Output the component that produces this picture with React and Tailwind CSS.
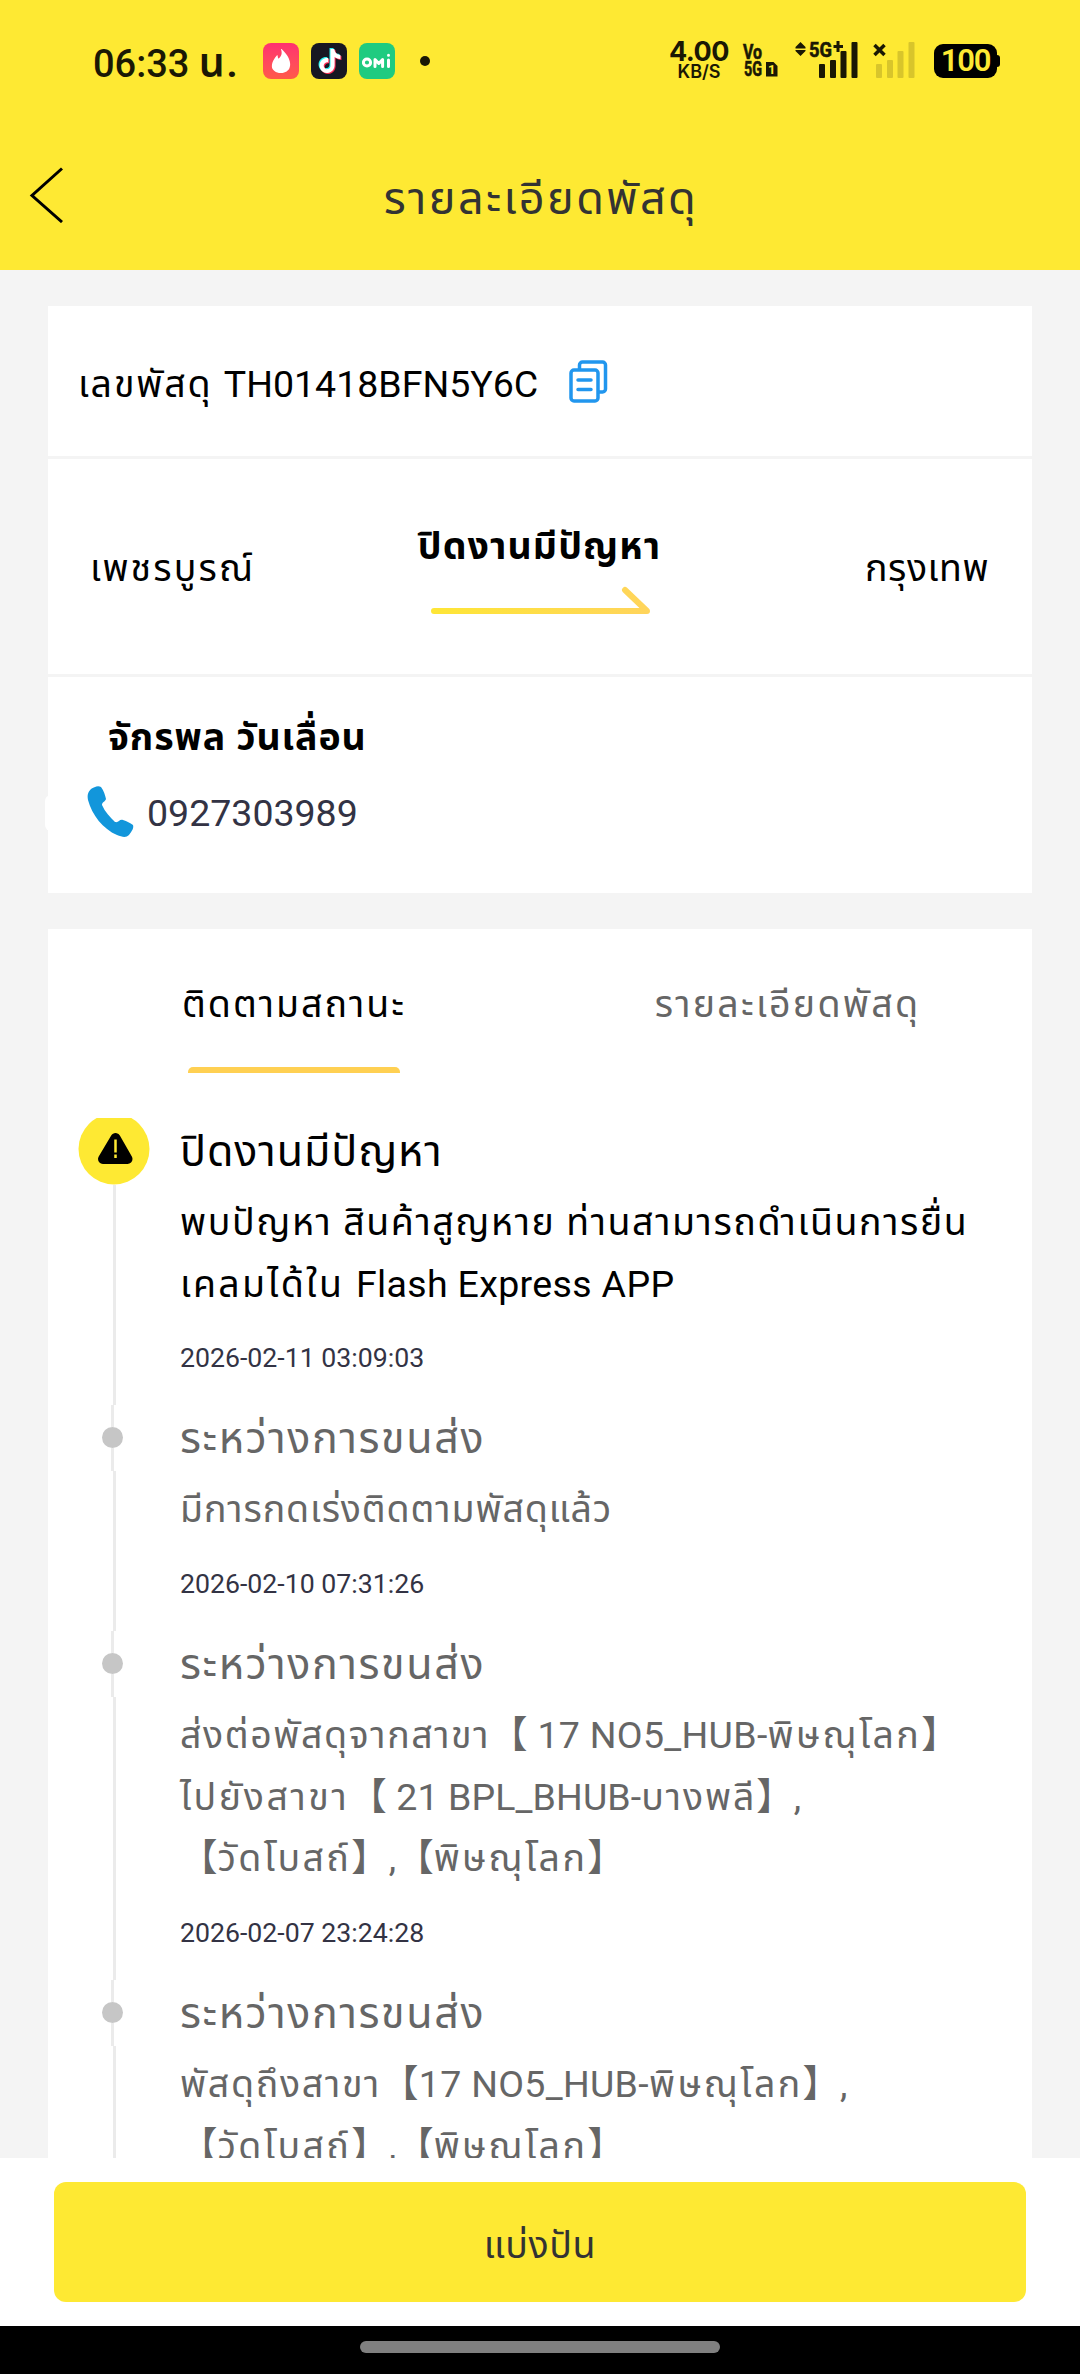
import { SiTinder, SiTiktok } from 'react-icons/si';

// each line is a list of [text, tracking] runs, Thai runs are set a bit wider than Latin ones
const events = [
    {
        title: 'ปิดงานมีปัญหา',
        titleTracking: 'tracking-[0.9px]',
        lines: [
            [['พบปัญหา สินค้าสูญหาย ท่านสามารถดำเนินการยื่น', 'tracking-[1.6px]']],
            [['เคลมได้ใน ', 'tracking-[2.3px]'], ['Flash Express APP', 'tracking-[0.35px]']],
        ],
        time: '2026-02-11 03:09:03',
        active: true,
    },
    {
        title: 'ระหว่างการขนส่ง',
        titleTracking: 'tracking-[1.6px]',
        lines: [[['มีการกดเร่งติดตามพัสดุแล้ว', 'tracking-[0.9px]']]],
        time: '2026-02-10 07:31:26',
    },
    {
        title: 'ระหว่างการขนส่ง',
        titleTracking: 'tracking-[1.6px]',
        lines: [
            [['ส่งต่อพัสดุจากสาขา', 'tracking-[1.6px]'], ['【 17 NO5_HUB-', 'tracking-[0.3px]'], ['พิษณุโลก', 'tracking-[2.4px]'], ['】', 'tracking-normal']],
            [['ไปยังสาขา', 'tracking-[2.6px]'], ['【 21 BPL_BHUB-', 'tracking-[0.1px]'], ['บางพลี', 'tracking-[1.9px]'], ['】,', 'tracking-normal']],
            [['【', 'tracking-normal'], ['วัดโบสถ์', 'tracking-[2.4px]'], ['】,【', 'tracking-normal'], ['พิษณุโลก', 'tracking-[2.4px]'], ['】', 'tracking-normal']],
        ],
        time: '2026-02-07 23:24:28',
    },
    {
        title: 'ระหว่างการขนส่ง',
        titleTracking: 'tracking-[1.6px]',
        lines: [
            [['พัสดุถึงสาขา', 'tracking-[1.7px]'], ['【17 NO5_HUB-', 'tracking-[0.3px]'], ['พิษณุโลก', 'tracking-[2.4px]'], ['】,', 'tracking-normal']],
            [['【', 'tracking-normal'], ['วัดโบสถ์', 'tracking-[2.4px]'], ['】,【', 'tracking-normal'], ['พิษณุโลก', 'tracking-[2.4px]'], ['】', 'tracking-normal']],
        ],
        time: '2026-02-07 22:51:09',
    },
];

function SignalBars({ className }) {
    return (
        <svg className={className} width="39" height="36" viewBox="0 0 39 36" fill="currentColor">
            <rect x="0" y="22" width="6" height="14" rx="1" />
            <rect x="11" y="18" width="6" height="18" rx="1" />
            <rect x="21.5" y="9" width="6" height="27" rx="1" />
            <rect x="32.5" y="0" width="6" height="36" rx="1" />
        </svg>
    );
}

function StatusBar() {
    return (
        <div className="flex h-[120px] items-start pl-[93px] text-[#1a1804]">
            <div className="mt-[40px] w-[170px] whitespace-nowrap text-[38px] font-medium leading-[48px]">
                06:33 <span className="text-[41px] font-semibold leading-none tracking-[1.5px]">น.</span>
            </div>
            <div className="mt-[43px] flex h-9 items-center gap-3">
                <div className="flex size-9 items-center justify-center rounded-lg bg-gradient-to-b from-[#ff3070] to-[#ff5a48]">
                    <SiTinder className="size-6 text-white" />
                </div>
                <div className="relative flex size-9 items-center justify-center rounded-lg bg-[#171822]">
                    <SiTiktok className="absolute left-[6px] top-[5px] size-6 text-[#25f4ee]" />
                    <SiTiktok className="absolute left-[8px] top-[7px] size-6 text-[#fe2c55]" />
                    <SiTiktok className="absolute left-[7px] top-[6px] size-6 text-white" />
                </div>
                <div className="flex size-9 items-center justify-center rounded-lg bg-[#1fcb80]">
                    <svg width="30" height="16" viewBox="0 0 30 16" fill="none" stroke="white" strokeWidth="3" strokeLinecap="round" strokeLinejoin="round">
                        <circle cx="5" cy="9.5" r="3.6" />
                        <path d="M13 13.5V6.5l3.8 4 3.8-4v7M26.5 7v6.5M26.5 2.2v.1" />
                    </svg>
                </div>
                <div className="ml-[13px] size-[10px] rounded-full bg-[#1a1804]" />
            </div>
            <div className="ml-[239px] mt-[40px] flex w-[60px] flex-col items-center font-[Inter] font-bold">
                <span className="text-[27px] leading-[24px] tracking-[-0.5px]">4.00</span>
                <span className="text-[18px] font-semibold leading-[15px]">KB/S</span>
            </div>
            <svg className="ml-[14px] mt-[42px] overflow-visible" width="36" height="36" viewBox="0 0 36 36" fill="currentColor">
                <g fontSize="20" fontWeight="700" stroke="currentColor" strokeWidth="0.6">
                    <text x="0" y="17" textLength="19" lengthAdjust="spacingAndGlyphs">Vo</text>
                    <text x="1" y="34" textLength="18" lengthAdjust="spacingAndGlyphs">5G</text>
                </g>
                <path d="M23 20h7.500l4 4v10.500H23z" />
                <text x="25" y="32" fontSize="13" fontWeight="700" fill="#fee933">1</text>
            </svg>
            <div className="relative ml-[16px] mt-[42px] h-9 w-[63px]">
                <svg className="absolute left-0 top-0 overflow-visible" width="52" height="18" viewBox="0 0 52 18" fill="currentColor">
                    <path d="M5.500 0l5 5v1.500H.5V5zM5.500 14l5-5V8H.5v1z" />
                    <text x="14" y="15" fontSize="21" fontWeight="700" stroke="currentColor" strokeWidth="0.6" textLength="23" lengthAdjust="spacingAndGlyphs">5G</text>
                    <path d="M38.500 3h3V-1h3v4h3.500v3h-3.500v4h-3V6h-3z" />
                </svg>
                <SignalBars className="ml-[24px]" />
            </div>
            <div className="relative ml-[15px] mt-[42px] h-9 w-[42px]">
                <svg className="absolute left-0 top-0" width="13" height="15" viewBox="0 0 13 15" fill="none" stroke="currentColor" strokeWidth="3.500">
                    <path d="M1.500 3l10 10M11.500 3l-10 10" />
                </svg>
                <SignalBars className="ml-[3px] text-[#d8c52b]" />
            </div>
            <div className="ml-[19px] mt-[44px] flex items-center">
                <div className="flex h-[34px] w-[63px] items-center justify-center rounded-[9px] bg-black text-[31px] font-semibold leading-[34px] tracking-[-1.2px] text-[#fee933]">
                    100
                </div>
                <div className="h-3 w-[3px] rounded-r-sm bg-black" />
            </div>
        </div>
    );
}

function TimelineItem({ event }) {
    const { title, titleTracking, lines, time, active } = event;

    return (
        <div className="flex">
            {/* Rail */}
            <div className="flex w-[132px] flex-col">
                {active ? (
                    <svg className="ml-[30px] shrink-0" width="72" height="67" viewBox="0 0 72 67">
                        <circle cx="36" cy="31" r="35.500" fill="#fee933" />
                        <path d="M37.500 20L25 41h24.500z" stroke="#000" strokeWidth="10" strokeLinejoin="round" />
                        <path d="M37.500 21.500v13M37.500 36.500v3.500" stroke="#fee933" strokeWidth="2.500" />
                    </svg>
                ) : (
                    <div className="ml-[54px] flex h-[66px] w-[21px] shrink-0 flex-col items-center">
                        <div className="h-[22px] w-[3px] bg-[#ebebeb]" />
                        <div className="size-[21px] rounded-full bg-[#c6c6c6]" />
                        <div className="h-[23px] w-[3px] bg-[#ebebeb]" />
                    </div>
                )}
                <div className="ml-[65px] w-[3px] flex-1 bg-[#ebebeb]" />
            </div>
            <div className={active ? 'whitespace-nowrap text-black' : 'whitespace-nowrap text-[#666]'}>
                <h3 className={`text-[43px] leading-[66px] ${titleTracking}`}>{title}</h3>
                <div className="mt-2 text-[37.5px] leading-[61.7px]">
                    {lines.map((runs, i) => (
                        <p key={i}>
                            {runs.map(([text, tracking], j) => (
                                <span key={j} className={tracking}>{text}</span>
                            ))}
                        </p>
                    ))}
                </div>
                <p className="mb-[27.300px] mt-[22.700px] text-[26.7px] leading-10 text-[#333344]">{time}</p>
            </div>
        </div>
    );
}

export default function App() {
    return (
        <div className="flex h-[2374px] w-[1080px] flex-col overflow-hidden bg-[#f4f4f4] font-['Roboto','Noto_Sans_Thai','Noto_Sans_CJK_SC',sans-serif] text-black">
            {/* Header */}
            <header className="h-[270px] shrink-0 bg-[#fee933]">
                <StatusBar />
                <div className="grid h-[150px] grid-cols-[200px_1fr_200px]">
                    <svg className="ml-[28px] mt-[47px]" width="36" height="56" viewBox="0 0 36 56" fill="none" stroke="#000" strokeWidth="3">
                        <path d="M34 1.500L4 28.500l30 26.500" />
                    </svg>
                    <h1 className="mt-[46px] pl-[2px] text-center text-[45px] leading-[66px] tracking-[2.4px] text-[#333]">รายละเอียดพัสดุ</h1>
                </div>
            </header>

            <main className="min-h-0 flex-1 overflow-hidden px-12 pt-9">
                {/* Parcel summary */}
                <section className="relative h-[587px] bg-white">
                    <div className="flex h-[150px] items-start pl-[30px]">
                        <p className="mt-[48px] w-[462px] whitespace-nowrap text-[37.5px] leading-[60px]">
                            <span className="tracking-[1.9px]">เลขพัสดุ </span>TH01418BFN5Y6C
                        </p>
                        <svg className="ml-[29px] mt-[54px]" width="40" height="43" viewBox="0 0 40 43" fill="none" stroke="#2196ee" strokeWidth="3.500" strokeLinejoin="round" strokeLinecap="round">
                            <rect x="2" y="10" width="27" height="31" rx="3" />
                            <path d="M10.500 9V5a3 3 0 0 1 3-3h20a3 3 0 0 1 3 3v24a3 3 0 0 1-3 3h-3.500M9 20h13M9 29.500h13" />
                        </svg>
                    </div>
                    <div className="flex h-[221px] items-start justify-between border-y-[3px] border-[#f4f4f4] pl-[42px] pr-[43px] text-[37.5px] leading-[60px]">
                        <p className="mt-[79px] w-[240px] tracking-[2.1px]">เพชรบูรณ์</p>
                        <div className="flex flex-col items-center">
                            <p className="mt-[57px] whitespace-nowrap font-bold tracking-[1.1px]">ปิดงานมีปัญหา</p>
                            <svg className="ml-[3px] mt-[10px]" width="222" height="32" viewBox="0 0 222 32" fill="none">
                                <defs>
                                    <linearGradient id="arrow" gradientUnits="userSpaceOnUse" x1="0" y1="0" x2="222" y2="0">
                                        <stop offset="0" stopColor="#fee636" />
                                        <stop offset="1" stopColor="#ffd45c" />
                                    </linearGradient>
                                </defs>
                                <path d="M4 25H217L195 4" stroke="url(#arrow)" strokeWidth="6" strokeLinecap="round" strokeLinejoin="round" />
                            </svg>
                        </div>
                        <p className="mt-[79px] w-[240px] text-right tracking-[0.5px]">กรุงเทพ</p>
                    </div>
                    <div className="pl-[38px] pt-[30px]">
                        <p className="pl-[22px] text-[37.5px] font-bold leading-[60px] tracking-[0.9px]">จักรพล วันเลื่อน</p>
                        <div className="mt-[16px] flex">
                            <svg className="mt-px" width="50" height="56" viewBox="0 0 50 56" fill="#1296db">
                                <path d="M5 5C8 3 12 1 15 3c3 4 4 8 5 12-1 3-4 3-4 6 3 7 8 12 13 17 4 1 4-3 8-2 4 1 7 3 10 5 1 3-1 6-4 10-3 3-7 2-12 0C17 45 6 31 2 16 1 11 2 8 5 5z" />
                            </svg>
                            <p className="ml-[11px] text-[37.5px] leading-[60px] text-[#333344]">0927303989</p>
                        </div>
                    </div>
                    <div className="absolute -left-[3px] top-[489px] h-[36px] w-[6px] rounded-l-full bg-white" />
                </section>

                {/* Tracking */}
                <section className="mt-9 h-[1400px] bg-white">
                    <div className="flex h-[189px] text-[37.5px] leading-[60px]">
                        <div className="flex w-1/2 flex-col items-center">
                            <p className="mt-[45px] tracking-[2px]">ติดตามสถานะ</p>
                            <div className="mt-[33px] h-[6px] w-[212px] rounded-t-[5px] bg-[#ffd052]" />
                        </div>
                        <p className="mt-[45px] w-1/2 pl-[3px] text-center tracking-[2.3px] text-[#666]">รายละเอียดพัสดุ</p>
                    </div>
                    {events.map((event) => (
                        <TimelineItem key={event.time} event={event} />
                    ))}
                </section>
            </main>

            {/* Share */}
            <footer className="h-[168px] shrink-0 bg-white px-[54px] pt-6">
                <button className="h-[120px] w-full rounded-xl bg-[#fee933] pt-[6px] text-[37.5px] tracking-[0.6px] text-[#333]">แบ่งปัน</button>
            </footer>
            <div className="flex h-12 shrink-0 justify-center bg-black pt-[15px]">
                <div className="h-3 w-[360px] rounded-full bg-[#808080]" />
            </div>
        </div>
    );
}
